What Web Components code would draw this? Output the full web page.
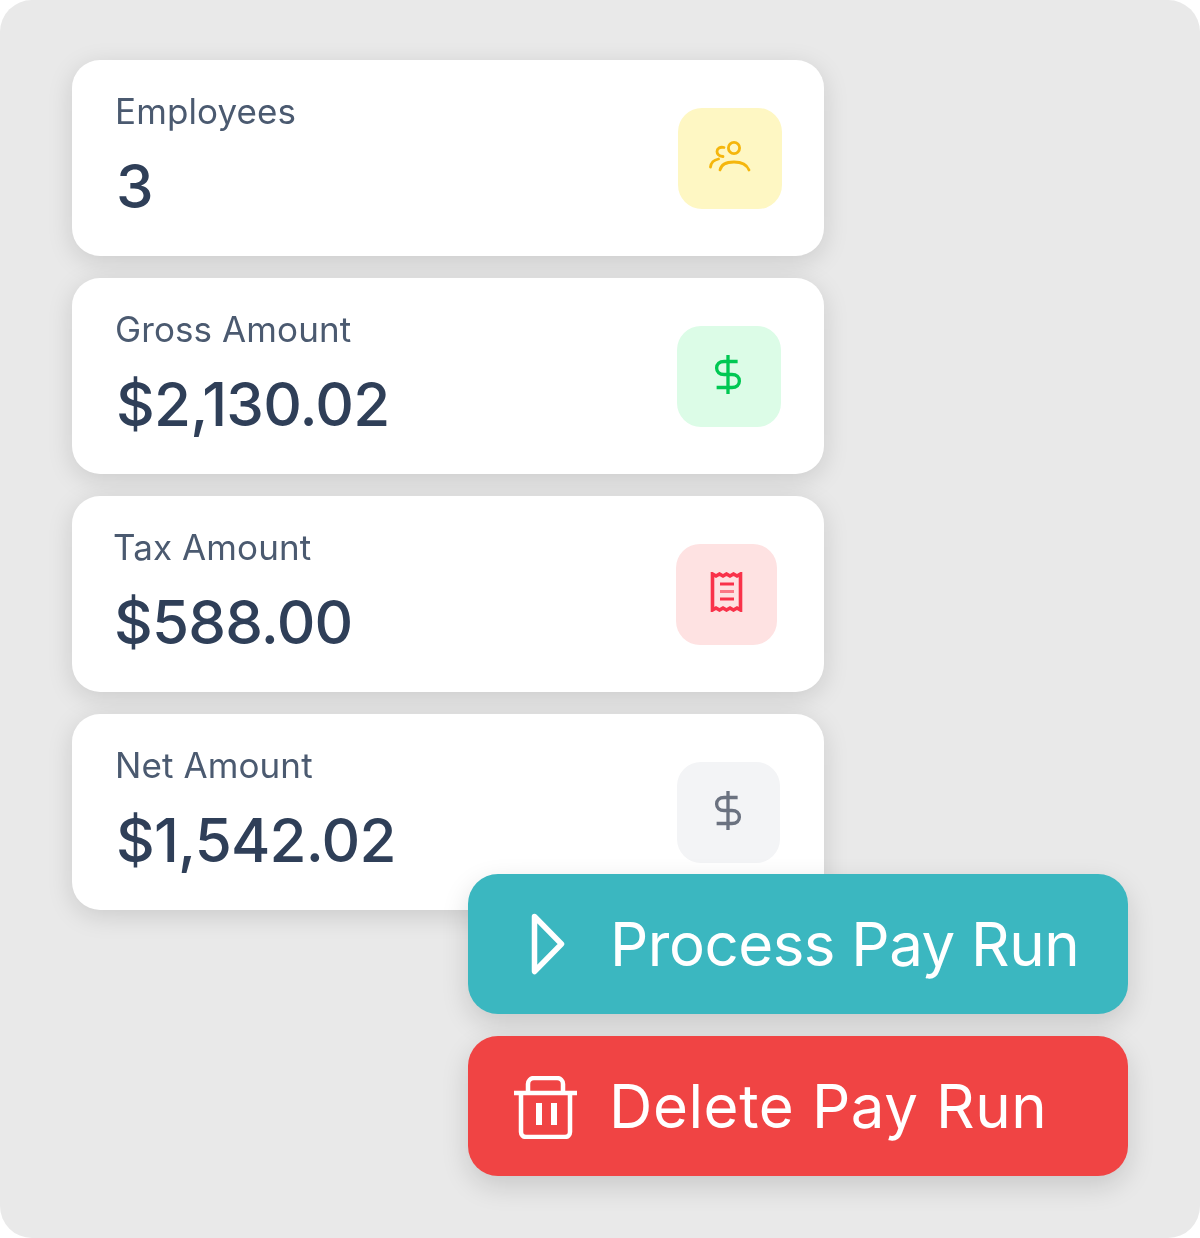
<!DOCTYPE html>
<html>
<head>
<meta charset="utf-8">
<title>Pay Run</title>
<style>
  html, body { margin: 0; background: #fff; }
  body { font-family: Inter, "Liberation Sans", sans-serif; }
</style>
</head>
<body>
<pay-panel>
  <stat-card label="Employees" value="3" inset="44" side="42" box="104" tint="#fef7c3">
    <svg viewBox="0 0 42 32" width="42" height="32" fill="none" stroke="#f5b60c" stroke-width="2.800" stroke-linecap="round">
      <circle cx="25" cy="8" r="5.600"/>
      <path d="M11 30c1-5 6-8 14-8s13 3 15 8"/>
      <path d="M15 7.500c-4-1-7 1-7 4s2 4.500 6 5"/>
      <path d="M1.500 27c.5-4 3-7 8-8"/>
    </svg>
  </stat-card>
  <stat-card label="Gross Amount" value="$2,130.02" inset="44" side="43" box="104" tint="#dcfce7">
    <dollar-icon color="#00c853"></dollar-icon>
  </stat-card>
  <stat-card label="Tax Amount" value="$588.00" inset="42" side="47" box="101" tint="#fee2e2">
    <svg viewBox="0 0 34 40" width="34" height="40" fill="none" stroke="#f9324a" stroke-width="3.600">
      <path d="M2.500 2v36l3.500-2 3.500 2 3.500-2 3.500 2 3.500-2 3.500 2 3.500-2 3.500 2V2l-3.500 2-3.500-2-3.500 2-3.500-2-3.500 2-3.500-2-3.500 2z"/>
      <path d="M10 12h14M10 27h14" stroke-width="3"/>
      <path d="M10 19.500h14" stroke-width="3" stroke-opacity="0.6"/>
    </svg>
  </stat-card>
  <stat-card label="Net Amount" value="$1,542.02" inset="44" side="44" box="103" tint="#f3f4f6">
    <dollar-icon color="#6b7280"></dollar-icon>
  </stat-card>
  <div slot="actions">
    <action-button label="Process Pay Run" color="#3bb7c0" gap="45" lead="63" spacing="-0.5">
      <svg viewBox="0 0 34 62" width="34" height="62" fill="none" stroke="#fff" stroke-width="5.500" stroke-linejoin="round">
        <path d="M3.500 3.500 30.500 31 3.500 58.500z"/>
      </svg>
    </action-button>
    <action-button label="Delete Pay Run" color="#f04444" gap="32" lead="46" spacing="0.6">
      <svg viewBox="0 0 63 63" width="63" height="63" fill="none" stroke="#fff" stroke-width="4.500" style="margin-top: 3px">
        <path d="M0 17h63M7 17v39a5 5 0 0 0 5 5h39a5 5 0 0 0 5-5V17M14 16V8a6 6 0 0 1 6-6h23a6 6 0 0 1 6 6v8"/>
        <path d="M25 27v22M40 27v22" stroke-width="6"/>
      </svg>
    </action-button>
  </div>
</pay-panel>

<script>
class PayPanel extends HTMLElement {
  constructor() {
    super();
    this.attachShadow({ mode: "open" });
    this.shadowRoot.innerHTML = `
    <style>
      :host {
        display: block;
        box-sizing: border-box;
        width: 1200px;
        height: 1238px;
        padding: 60px 0 0 72px;
        background: #e9e9e9;
        border-radius: 32px;
      }
      .cards {
        display: flex;
        flex-direction: column;
        gap: 22px;
        width: 752px;
      }
      .actions {
        width: 660px;
        margin: -36px 0 0 396px;
        position: relative;
      }
    </style>
    <div class="cards"><slot></slot></div>
    <div class="actions"><slot name="actions"></slot></div>
    `;
  }
}

class StatCard extends HTMLElement {
  constructor() {
    super();
    this.attachShadow({ mode: "open" });
    this.shadowRoot.innerHTML = `
    <style>
      :host {
        display: flex;
        box-sizing: border-box;
        height: 196px;
        align-items: center;
        justify-content: space-between;
        background: #fff;
        border-radius: 28px;
        box-shadow: 0 6px 26px rgba(0, 0, 0, 0.13);
      }
      .text { display: flex; flex-direction: column; margin-top: -2px; filter: blur(0.5px); }
      .label { font-size: 35px; line-height: 40px; letter-spacing: 0.1px; margin-left: -1px; margin-top: -2px; color: #4b5a70; }
      .value { font-size: 60px; font-weight: 500; letter-spacing: -0.8px; line-height: 72px; margin-top: 19px; color: #2f3f58; }
      .icon {
        display: flex;
        align-items: center;
        justify-content: center;
        height: 101px;
        border-radius: 24px;
      }
      ::slotted(svg), ::slotted(dollar-icon) { filter: blur(0.5px); margin-bottom: 4px; }
    </style>
    <div class="text">
      <div class="label"></div>
      <div class="value"></div>
    </div>
    <div class="icon"><slot></slot></div>
    `;
  }

  connectedCallback() {
    const root = this.shadowRoot;
    root.querySelector(".label").textContent = this.getAttribute("label");
    root.querySelector(".value").textContent = this.getAttribute("value");
    root.querySelector(".text").style.marginLeft = this.getAttribute("inset") + "px";
    const icon = root.querySelector(".icon");
    icon.style.background = this.getAttribute("tint");
    icon.style.width = this.getAttribute("box") + "px";
    icon.style.marginRight = this.getAttribute("side") + "px";
  }
}

class DollarIcon extends HTMLElement {
  constructor() {
    super();
    this.attachShadow({ mode: "open" });
    this.shadowRoot.innerHTML = `
    <style>
      :host { display: flex; margin-right: 2px; }
    </style>
    <svg viewBox="0 0 32 44" width="28" height="41" preserveAspectRatio="none" fill="none" stroke="currentColor" stroke-width="3.800">
      <path d="M16 1v42M27 8H11.500C6 8 3 11 3 15s3 7 8.500 7h9c5.500 0 8.500 3 8.500 7s-3 7-8.500 7H3"/>
    </svg>
    `;
  }

  connectedCallback() {
    this.style.color = this.getAttribute("color");
  }
}

class ActionButton extends HTMLElement {
  constructor() {
    super();
    this.attachShadow({ mode: "open" });
    this.shadowRoot.innerHTML = `
    <style>
      :host {
        display: flex;
        box-sizing: border-box;
        height: 140px;
        margin-bottom: 22px;
        align-items: center;
        color: #fff;
        border-radius: 30px;
        box-shadow: 0 10px 28px rgba(0, 0, 0, 0.14);
        font-size: 60px;
      }
      .icon { display: flex; }
    </style>
    <span class="icon"><slot></slot></span>
    <span class="label"></span>
    `;
  }

  connectedCallback() {
    this.style.background = this.getAttribute("color");
    this.style.paddingLeft = this.getAttribute("lead") + "px";
    const label = this.shadowRoot.querySelector(".label");
    label.textContent = this.getAttribute("label");
    label.style.marginLeft = this.getAttribute("gap") + "px";
    label.style.letterSpacing = this.getAttribute("spacing") + "px";
  }
}

customElements.define("pay-panel", PayPanel);
customElements.define("stat-card", StatCard);
customElements.define("dollar-icon", DollarIcon);
customElements.define("action-button", ActionButton);
</script>
</body>
</html>
